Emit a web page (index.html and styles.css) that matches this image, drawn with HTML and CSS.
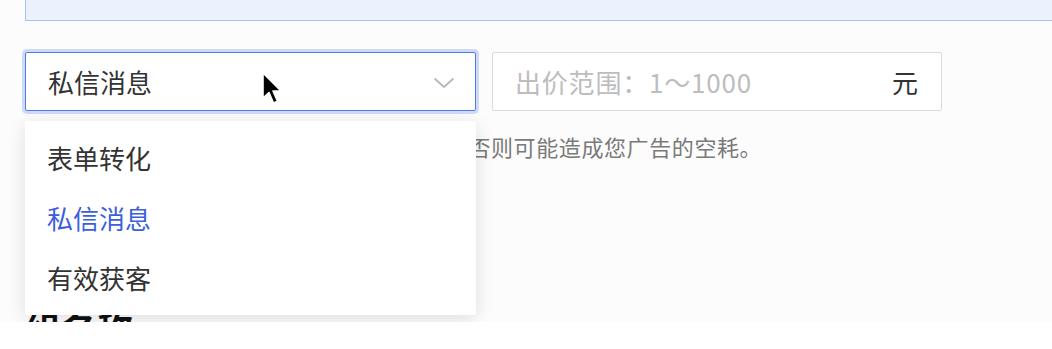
FILE: index.html
```html
<!DOCTYPE html>
<html lang="zh-CN">
<head>
<meta charset="utf-8">
<title>出价设置</title>
<link rel="stylesheet" href="styles.css">
</head>
<body>
<div class="page">
  <div class="banner"></div>
  <div class="row">
    <div class="select">
      <span class="select-value">私信消息</span>
      <svg class="chevron" width="22" height="12" viewBox="0 0 22 12"><path d="M1.5 1.5 L11 10 L20.5 1.5" fill="none" stroke="#b8b8b8" stroke-width="1.8"/></svg>
    </div>
    <div class="input">
      <span class="placeholder">出价范围：1～1000</span>
      <span class="unit">元</span>
    </div>
  </div>
  <p class="help">请确保您已开通私信并及时回复用户消息，否则可能造成您广告的空耗。</p>
  <h2 class="title">组名称</h2>

  <ul class="dropdown">
    <li class="option">表单转化</li>
    <li class="option active">私信消息</li>
    <li class="option">有效获客</li>
  </ul>

  <svg class="cursor" width="24" height="34" viewBox="0 0 24 34">
    <path d="M2 1 L2 26 L8 20.5 L12.5 31 L16.5 29.2 L12 19 L20 19 Z" fill="#000" stroke="#fff" stroke-width="1.6" stroke-linejoin="round"/>
  </svg>
</div>
</body>
</html>
```

FILE: styles.css
```css
* { box-sizing: border-box; }

html, body {
  margin: 0;
  padding: 0;
  background: #ffffff;
}

body {
  font-family: "Noto Sans CJK SC", "Noto Sans", sans-serif;
  color: #333333;
}

.page {
  position: relative;
  height: 322px;
  overflow: hidden;
  padding-left: 25px;
  background: #fcfcfc;
}

.banner {
  height: 21px;
  background: #ebf2fe;
  border-left: 1px solid #a9c3f6;
  border-bottom: 1px solid #a9c3f6;
}

.row {
  display: flex;
  gap: 16px;
  margin-top: 31px;
}

.select {
  width: 451px;
  height: 59px;
  border: 1.5px solid #4f7ce9;
  border-radius: 2px;
  box-shadow: 0 0 0 3px rgba(90, 130, 240, 0.28);
  background: #ffffff;
  display: flex;
  align-items: center;
  justify-content: space-between;
  padding: 0 20px 0 22px;
}

.select-value {
  font-size: 26px;
  color: #333333;
}

.chevron {
  display: block;
  margin-top: 2px;
}

.input {
  width: 450px;
  height: 59px;
  border: 1.5px solid #dadada;
  border-radius: 2px;
  background: #ffffff;
  display: flex;
  align-items: center;
  justify-content: space-between;
  padding: 0 23px 0 22px;
}

.placeholder {
  font-size: 26px;
  letter-spacing: 0.8px;
  color: #bdbdbd;
}

.unit {
  font-size: 26px;
  color: #333333;
}

.help {
  margin: 20px 0 0 14px;
  font-size: 22px;
  letter-spacing: 0.6px;
  line-height: 30px;
  color: #7a7a7a;
  white-space: nowrap;
}

.title {
  margin: 147px 0 0 0;
  font-size: 36px;
  line-height: 40px;
  font-weight: 700;
  color: #111111;
}

.dropdown {
  position: absolute;
  top: 121px;
  left: 25px;
  width: 451px;
  margin: 0;
  padding: 7px 0;
  list-style: none;
  background: #ffffff;
  border-radius: 2px;
  box-shadow: 0 4px 18px rgba(0, 0, 0, 0.12);
}

.option {
  height: 60px;
  line-height: 60px;
  padding-left: 22px;
  font-size: 26px;
  color: #333333;
}

.option.active {
  color: #3c5fdb;
}

.cursor {
  position: absolute;
  left: 261px;
  top: 72px;
}
```
